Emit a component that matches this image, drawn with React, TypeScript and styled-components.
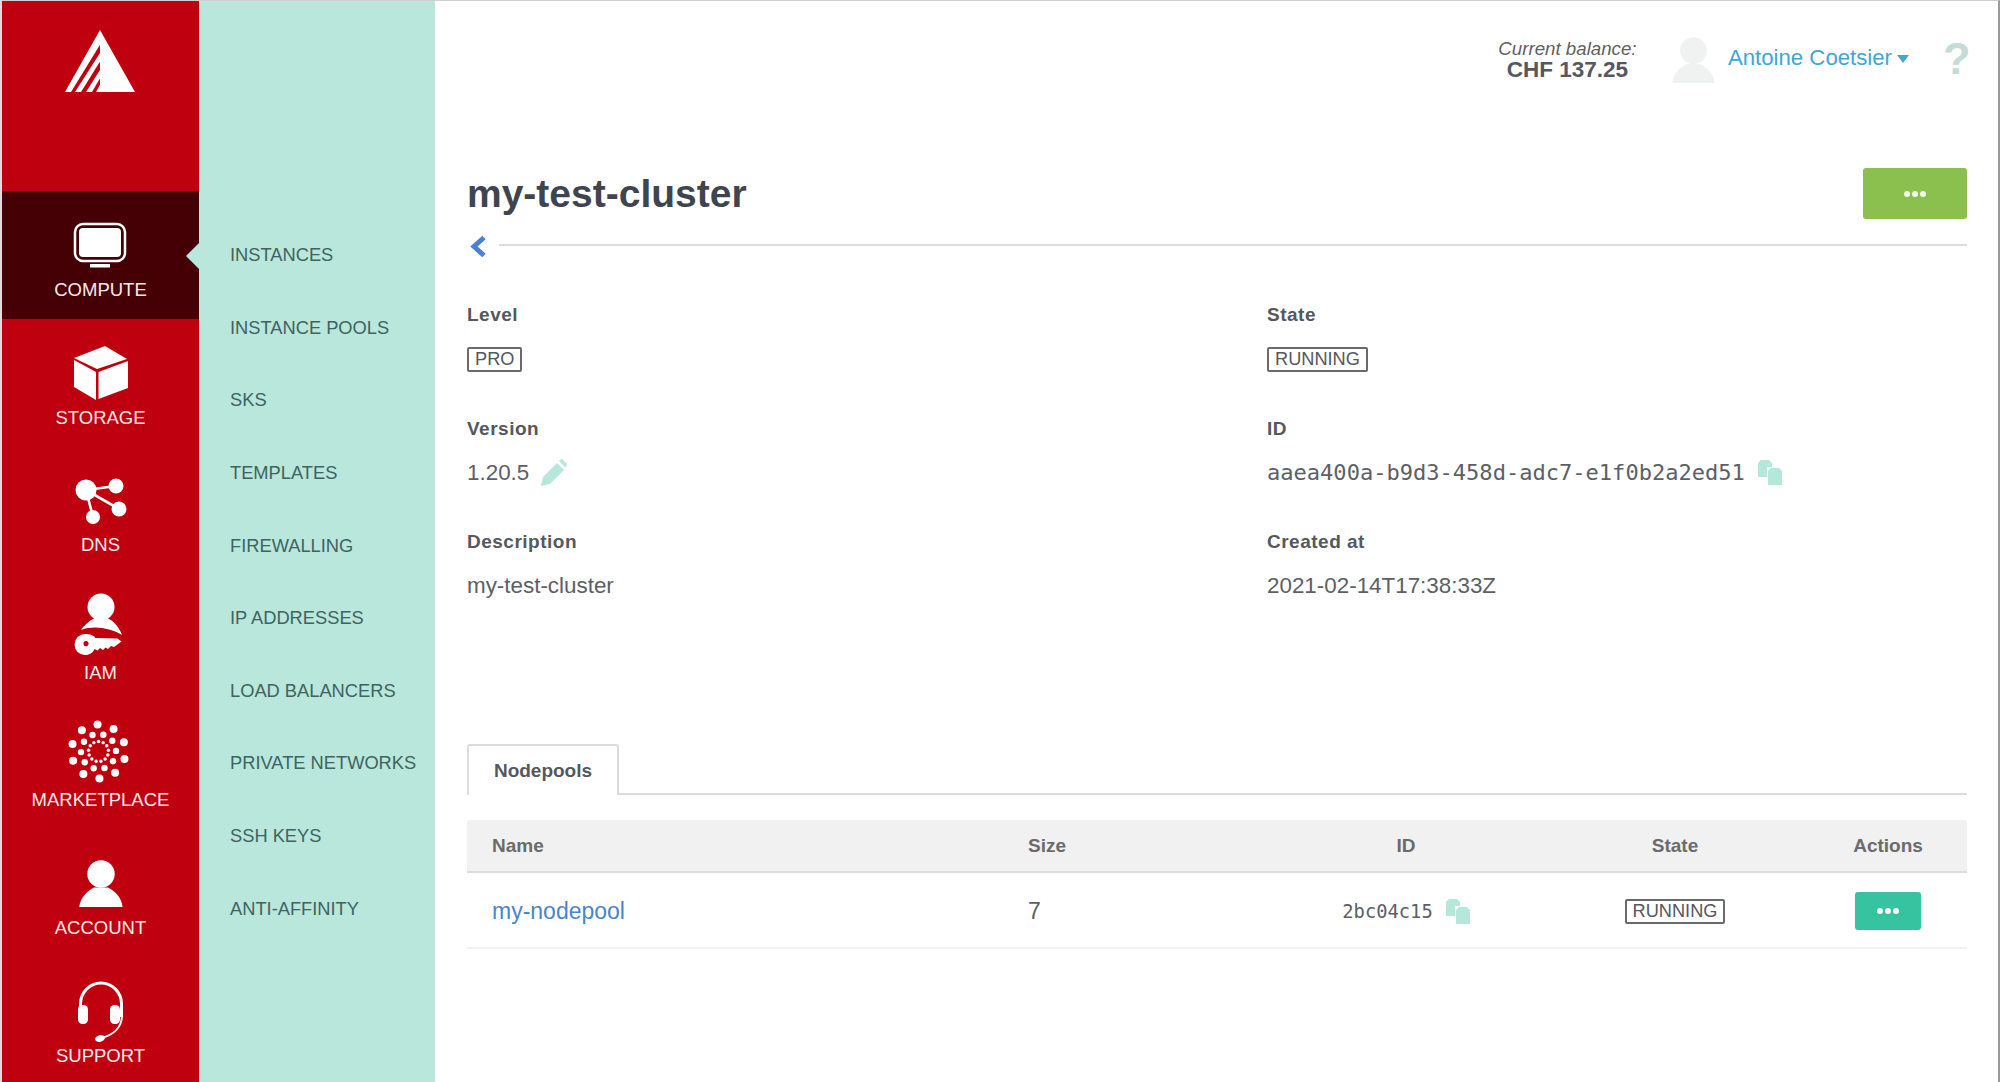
import React from "react";
import styled, { createGlobalStyle } from "styled-components";

const COLORS = {
  red: "#bf000e",
  redDark: "#450005",
  mint: "#b9e7dc",
  mintText: "#3f6361",
  mintIcon: "#b5e7da",
  text: "#5c6064",
  label: "#55585c",
  title: "#3f454f",
  line: "#dcdcdc",
  blue: "#3fa7d1",
  link: "#4a85c9",
  green: "#8bbf4e",
  teal: "#36c4a0",
};

const SANS = `"Liberation Sans", Arial, sans-serif`;
const MONO = `"DejaVu Sans Mono", "Liberation Mono", monospace`;

const GlobalStyle = createGlobalStyle`
  html, body {
    margin: 0;
    padding: 0;
    background: #fff;
  }
  * {
    box-sizing: border-box;
  }
`;

const LogoIcon = () => (
  <svg width="70" height="62" viewBox="0 0 70 59" preserveAspectRatio="none" fill="#fff">
    <polygon points="35,0 0,59 6,59 35,14" />
    <polygon points="10,59 16,59 35,30 35,22" />
    <polygon points="21,59 27,59 35,46 35,38" />
    <polygon points="35,0 70,59 31,59 35,52" />
  </svg>
);

const ComputeIcon = () => (
  <>
    <rect x="11" y="13" width="50" height="37" rx="8" fill="none" stroke="#fff" strokeWidth="2.5" />
    <rect x="15" y="17" width="42" height="29" rx="4" fill="#fff" />
    <rect x="26" y="53" width="20" height="3.5" fill="#fff" />
  </>
);

const StorageIcon = () => (
  <>
    <polygon points="41,7 63,20 33,30 10,19" />
    <polygon points="10,21 32,33 32,61 10,48" />
    <polygon points="34.5,33 64,22 64,49 34.5,60" />
  </>
);

const DnsIcon = () => (
  <>
    <path d="M22 24 L52 20 M22 24 L55 43 M22 24 L29 51" stroke="#fff" strokeWidth="2.6" fill="none" />
    <circle cx="22" cy="24" r="10.5" />
    <circle cx="52" cy="20" r="7.5" />
    <circle cx="55" cy="43" r="7.5" />
    <circle cx="29" cy="51" r="7" />
  </>
);

const IamIcon = () => (
  <>
    <circle cx="37" cy="13" r="13.5" />
    <path d="M17 36 C22 29 27 26 31 24 L43 24 C50 27 55 33 58 41 C46 34 30 31 17 36 Z" />
    <path
      fillRule="evenodd"
      d="M21 40 a10.5 10.5 0 1 0 0 21 c5 0 8 -2.5 9.5 -6 l3 1.5 2.5 -2.5 3 2 2.5 -2.5 2.5 1.5 3 -3 3 1 7.5 -5.5 -4 -3 -22 -0.5 c-1.5 -2.5 -6 -4 -10.5 -4 Z M22 47 a2.6 2.6 0 1 0 0.01 0 Z"
    />
  </>
);

const rings = [
  { count: 10, radius: 27, r: 4, start: -92 },
  { count: 10, radius: 17.5, r: 3.2, start: -74 },
  { count: 13, radius: 10, r: 1.7, start: -90 },
];

const MarketplaceIcon = () => (
  <>
    {rings.flatMap((ring, i) =>
      Array.from({ length: ring.count }, (_, n) => {
        const a = ((ring.start + (n * 360) / ring.count) * Math.PI) / 180;
        return (
          <circle
            key={`${i}-${n}`}
            cx={34.5 + ring.radius * Math.cos(a)}
            cy={30.5 + ring.radius * Math.sin(a)}
            r={ring.r}
          />
        );
      })
    )}
  </>
);

const Person = () => (
  <>
    <circle cx="37" cy="25" r="13.7" />
    <path d="M15.3 58 C16 49 23 42 30 38.5 L44 38.5 C51 42 58 49 58.5 58 Z" />
  </>
);

const SupportIcon = () => (
  <>
    <path d="M16.5 40 V27 a20.5 21 0 0 1 41 0 V40" fill="none" stroke="#fff" strokeWidth="3" />
    <rect x="14" y="28" width="10" height="19" rx="4.5" />
    <rect x="46" y="28" width="10" height="19" rx="4.5" />
    <path d="M58 38 C58 50 50 58 37 61" fill="none" stroke="#fff" strokeWidth="2" />
    <ellipse cx="36" cy="61.5" rx="5" ry="3.3" transform="rotate(-12 36 61.5)" />
  </>
);

const navItems = [
  { label: "COMPUTE", icon: <ComputeIcon />, active: true },
  { label: "STORAGE", icon: <StorageIcon /> },
  { label: "DNS", icon: <DnsIcon /> },
  { label: "IAM", icon: <IamIcon /> },
  { label: "MARKETPLACE", icon: <MarketplaceIcon /> },
  { label: "ACCOUNT", icon: <Person /> },
  { label: "SUPPORT", icon: <SupportIcon /> },
];

const subItems = [
  "INSTANCES",
  "INSTANCE POOLS",
  "SKS",
  "TEMPLATES",
  "FIREWALLING",
  "IP ADDRESSES",
  "LOAD BALANCERS",
  "PRIVATE NETWORKS",
  "SSH KEYS",
  "ANTI-AFFINITY",
];

const CopyIcon = () => (
  <CopySvg viewBox="0 0 24 25">
    <path d="M3 0 H11 L14 3 V7 H9 V17 H0 V3 Z" />
    <path d="M13 8 H21 L24 11 V25 H10 V11 Z" />
  </CopySvg>
);

const Dots = () => (
  <DotRow>
    <Dot />
    <Dot />
    <Dot />
  </DotRow>
);

const App = () => {
  return (
    <Shell>
      <GlobalStyle />
      <Sidebar>
        <LogoBox>
          <LogoIcon />
        </LogoBox>
        {navItems.map((item) => (
          <NavItem key={item.label} $active={item.active}>
            <NavIcon viewBox="0 0 72 68">{item.icon}</NavIcon>
            <NavLabel>{item.label}</NavLabel>
          </NavItem>
        ))}
      </Sidebar>
      <SubMenu>
        {subItems.map((item) => (
          <SubItem key={item}>{item}</SubItem>
        ))}
      </SubMenu>
      <Main>
        <TopBar>
          <Balance>
            <BalanceLabel>Current balance:</BalanceLabel>
            <BalanceValue>CHF 137.25</BalanceValue>
          </Balance>
          <Avatar viewBox="15 11 44 47">
            <Person />
          </Avatar>
          <UserName>Antoine Coetsier</UserName>
          <Caret viewBox="0 0 14 8">
            <path d="M1 0 H13 L7 8 Z" />
          </Caret>
          <Help>?</Help>
        </TopBar>
        <TitleRow>
          <Title>my-test-cluster</Title>
          <MenuButton>
            <Dots />
          </MenuButton>
        </TitleRow>
        <BackRow>
          <svg width="17" height="23" viewBox="0 0 17 23">
            <polyline points="14,2.5 4,11.5 14,20.5" fill="none" stroke="#4a80d6" strokeWidth="5" />
          </svg>
          <BackLine />
        </BackRow>
        <Details>
          <Field>
            <FieldLabel>Level</FieldLabel>
            <FieldValue>
              <Badge>PRO</Badge>
            </FieldValue>
          </Field>
          <Field>
            <FieldLabel>State</FieldLabel>
            <FieldValue>
              <Badge>RUNNING</Badge>
            </FieldValue>
          </Field>
          <Field>
            <FieldLabel>Version</FieldLabel>
            <FieldValue>
              1.20.5
              <PencilSvg viewBox="0 0 26 27">
                <path d="M0 27 L2 18 L16 4 L23 11 L9 25 Z" />
                <path d="M18 2 L20 0 Q21 0 22 1 L26 5 Q26 6 25 7 L24.5 8.5 Z" />
              </PencilSvg>
            </FieldValue>
          </Field>
          <Field>
            <FieldLabel>ID</FieldLabel>
            <FieldValue>
              <MonoId>aaea400a-b9d3-458d-adc7-e1f0b2a2ed51</MonoId>
              <CopyIcon />
            </FieldValue>
          </Field>
          <Field>
            <FieldLabel>Description</FieldLabel>
            <FieldValue>my-test-cluster</FieldValue>
          </Field>
          <Field>
            <FieldLabel>Created at</FieldLabel>
            <FieldValue>2021-02-14T17:38:33Z</FieldValue>
          </Field>
        </Details>
        <Tabs>
          <Tab>Nodepools</Tab>
        </Tabs>
        <Table>
          <HeadRow>
            <NameCell>Name</NameCell>
            <div>Size</div>
            <CenterCell>ID</CenterCell>
            <CenterCell>State</CenterCell>
            <ActionCell>Actions</ActionCell>
          </HeadRow>
          <BodyRow>
            <NameCell>
              <NodeLink>my-nodepool</NodeLink>
            </NameCell>
            <div>7</div>
            <CenterCell>
              <SmallMono>2bc04c15</SmallMono>
              <CopyIcon />
            </CenterCell>
            <CenterCell>
              <Badge>RUNNING</Badge>
            </CenterCell>
            <ActionCell>
              <RowButton>
                <Dots />
              </RowButton>
            </ActionCell>
          </BodyRow>
        </Table>
      </Main>
    </Shell>
  );
};

const Shell = styled.div`
  display: flex;
  height: 1082px;
  overflow: hidden;
  background: #fff;
  border-top: 1px solid #d0d0d0;
  border-left: 2px solid #e4dcdc;
  border-right: 2px solid #9a9a9a;
  font-family: ${SANS};
`;

const Sidebar = styled.nav`
  flex: 0 0 197px;
  background: ${COLORS.red};
`;

const LogoBox = styled.div`
  height: 190px;
  padding: 29px 1px 0 0;
  display: flex;
  justify-content: center;
  align-items: flex-start;
`;

const NavItem = styled.div<{ $active?: boolean }>`
  position: relative;
  height: 127.6px;
  padding-top: 20px;
  display: flex;
  flex-direction: column;
  align-items: center;
  background: ${(p) => (p.$active ? COLORS.redDark : "transparent")};

  ${(p) =>
    p.$active &&
    `
    &::after {
      content: "";
      position: absolute;
      right: 0;
      top: 52px;
      border-style: solid;
      border-width: 13px 13px 13px 0;
      border-color: transparent ${COLORS.mint} transparent transparent;
    }
  `}
`;

const NavIcon = styled.svg`
  width: 72px;
  height: 68px;
  margin-right: 2px;
  flex: none;
  fill: #fff;
  overflow: visible;
`;

const NavLabel = styled.div`
  margin-top: 1px;
  font-size: 18.5px;
  line-height: 20px;
  color: #fbe9e9;
  white-space: nowrap;
`;

const SubMenu = styled.div`
  flex: 0 0 236px;
  padding: 218px 0 0 31px;
  background: ${COLORS.mint};
`;

const SubItem = styled.div`
  height: 72.6px;
  display: flex;
  align-items: center;
  font-size: 18.3px;
  color: ${COLORS.mintText};
  white-space: nowrap;
`;

const Main = styled.main`
  flex: 1;
  min-width: 0;
  padding: 0 31px 0 32px;
  color: ${COLORS.text};
`;

const TopBar = styled.div`
  height: 167px;
  padding-top: 35px;
  display: flex;
  justify-content: flex-end;
  align-items: flex-start;
`;

const Balance = styled.div`
  width: 139px;
  margin-top: 2px;
  text-align: center;
  white-space: nowrap;
`;

const BalanceLabel = styled.div`
  font-size: 18.7px;
  font-style: italic;
  line-height: 21px;
  color: #5f5f5f;
`;

const BalanceValue = styled.div`
  font-size: 22.5px;
  font-weight: 700;
  line-height: 21px;
  color: #55585c;
`;

const Avatar = styled.svg`
  width: 43px;
  height: 48px;
  margin-left: 35px;
  fill: #f0f1f1;
`;

const UserName = styled.div`
  margin: 9px 0 0 13px;
  font-size: 22.2px;
  line-height: 26px;
  color: ${COLORS.blue};
  white-space: nowrap;
`;

const Caret = styled.svg`
  width: 14px;
  height: 8px;
  margin: 19px 0 0 4px;
  fill: ${COLORS.blue};
`;

const Help = styled.div`
  margin: 1px 0 0 33px;
  width: 24px;
  font-size: 45px;
  font-weight: 700;
  line-height: 44px;
  color: #c4dcd6;
`;

const TitleRow = styled.div`
  height: 51px;
  display: flex;
  justify-content: space-between;
  align-items: center;
`;

const Title = styled.h1`
  margin: 0;
  font-size: 39px;
  font-weight: 700;
  color: ${COLORS.title};
`;

const MenuButton = styled.div`
  width: 104px;
  height: 51px;
  display: flex;
  align-items: center;
  justify-content: center;
  border-radius: 3px;
  background: ${COLORS.green};
`;

const RowButton = styled.div`
  width: 66px;
  height: 38px;
  display: flex;
  align-items: center;
  justify-content: center;
  border-radius: 3px;
  background: ${COLORS.teal};
`;

const DotRow = styled.span`
  display: flex;
  gap: 2px;
`;

const Dot = styled.span`
  width: 6px;
  height: 6px;
  border-radius: 50%;
  background: #f4fbf2;
`;

const BackRow = styled.div`
  height: 54px;
  margin-bottom: 29px;
  display: flex;
  align-items: center;
  gap: 12px;
  padding-left: 3px;
`;

const BackLine = styled.div`
  flex: 1;
  height: 2px;
  margin-top: -2px;
  background: ${COLORS.line};
`;

const Details = styled.div`
  display: grid;
  grid-template-columns: 800px 1fr;
  grid-auto-rows: 113.5px;
`;

const Field = styled.div`
  display: flex;
  flex-direction: column;
  gap: 18px;
`;

const FieldLabel = styled.div`
  font-size: 19px;
  font-weight: 700;
  line-height: 26px;
  letter-spacing: 0.5px;
  color: ${COLORS.label};
`;

const FieldValue = styled.div`
  display: flex;
  align-items: center;
  height: 26px;
  font-size: 22.4px;
  color: ${COLORS.text};
`;

const MonoId = styled.span`
  font-family: ${MONO};
  font-size: 22.05px;
`;

const SmallMono = styled.span`
  font-family: ${MONO};
  font-size: 18.8px;
`;

const Badge = styled.span`
  display: inline-flex;
  align-items: center;
  height: 25px;
  padding: 0 6px;
  border: 2px solid #6a6a6a;
  border-radius: 2px;
  font-size: 18.2px;
  color: #55585c;
`;

const PencilSvg = styled.svg`
  width: 26px;
  height: 27px;
  margin-left: 12px;
  fill: ${COLORS.mintIcon};
`;

const CopySvg = styled.svg`
  width: 24px;
  height: 25px;
  margin-left: 13px;
  fill: ${COLORS.mintIcon};
`;

const Tabs = styled.div`
  height: 51px;
  margin-top: 101.5px;
  border-bottom: 2px solid ${COLORS.line};
`;

const Tab = styled.div`
  width: 152px;
  height: 51px;
  display: flex;
  align-items: center;
  justify-content: center;
  background: #fff;
  border: 2px solid ${COLORS.line};
  border-bottom: 0;
  border-radius: 3px 3px 0 0;
  font-size: 19px;
  font-weight: 700;
  color: ${COLORS.label};
`;

const Table = styled.div`
  margin-top: 25px;
`;

const columns = "561px 240px 276px 262px 161px";

const HeadRow = styled.div`
  height: 53px;
  display: grid;
  grid-template-columns: ${columns};
  align-items: center;
  background: #f1f1f1;
  border-bottom: 2px solid ${COLORS.line};
  border-radius: 3px 3px 0 0;
  font-size: 19px;
  font-weight: 700;
  color: #6b6b6b;
`;

const BodyRow = styled.div`
  height: 76px;
  padding-top: 2px;
  display: grid;
  grid-template-columns: ${columns};
  align-items: center;
  border-bottom: 2px solid #f2f2f2;
  font-size: 23px;
  color: ${COLORS.text};
`;

const NameCell = styled.div`
  padding-left: 25px;
`;

const CenterCell = styled.div`
  display: flex;
  align-items: center;
  justify-content: center;
`;

const ActionCell = styled.div`
  display: flex;
  justify-content: center;
  padding-left: 3px;
`;

const NodeLink = styled.a`
  color: ${COLORS.link};
`;

export default App;
